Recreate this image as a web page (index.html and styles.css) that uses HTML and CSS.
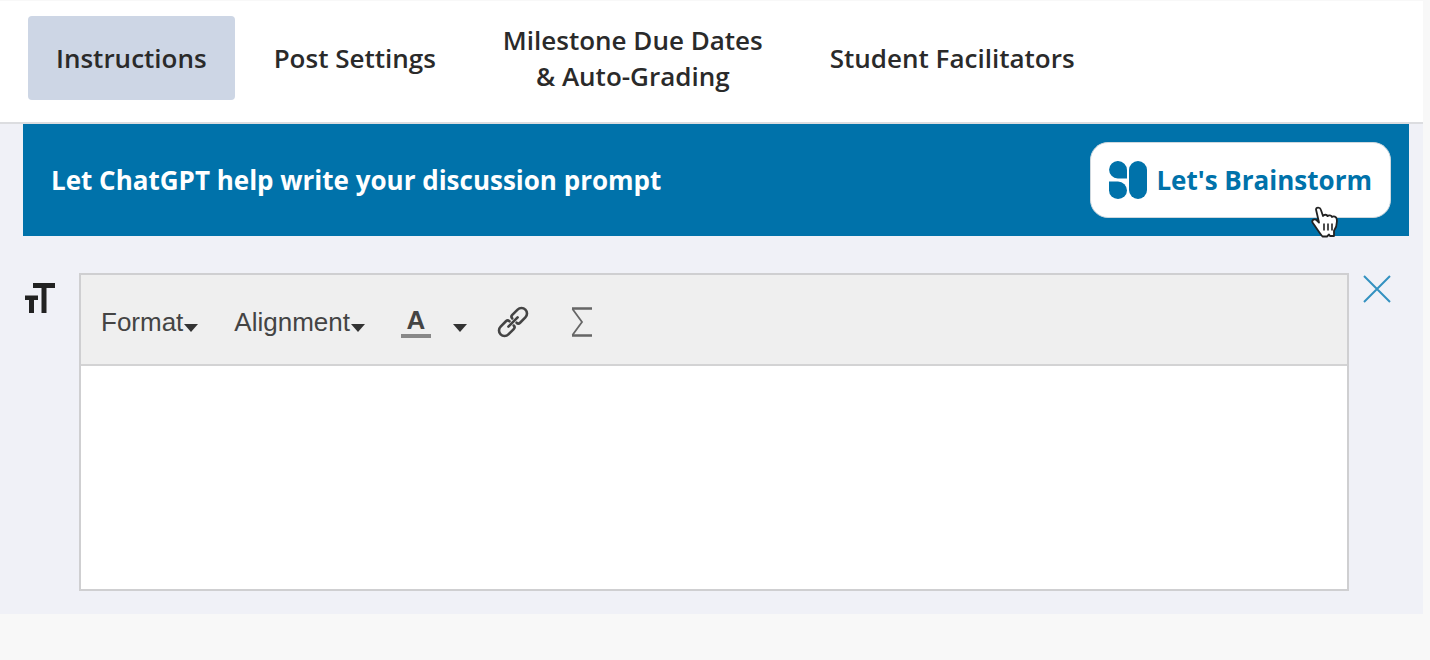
FILE: index.html
```html
<!DOCTYPE html>
<html lang="en">
<head>
    <meta charset="UTF-8">
    <title>Discussion Instructions</title>
    <link rel="stylesheet" href="styles.css">
</head>
<body>

    <!-- Tabs -->
    <nav class="tabs">
        <button type="button" class="tab active">Instructions</button>
        <button type="button" class="tab">Post Settings</button>
        <button type="button" class="tab">Milestone Due Dates<br>&amp; Auto-Grading</button>
        <button type="button" class="tab">Student Facilitators</button>
    </nav>

    <main class="panel">

        <!-- ChatGPT banner -->
        <div class="banner">
            <p class="banner-text">Let ChatGPT help write your discussion prompt</p>
            <button type="button" class="brainstorm">
                <svg class="brainstorm-logo" viewBox="0 0 38 38" fill="#0072aa" aria-hidden="true">
                    <path d="M9 0a9 9 0 0 1 9 9v8.500H8.700A8.700 8.700 0 0 1 9 0z"/>
                    <path d="M0 20.500h9a9 9 0 0 1 9 9a9 8.500 0 0 1-18 0z"/>
                    <rect x="20" y="0" width="18" height="38" rx="9"/>
                </svg>
                Let's Brainstorm
            </button>
            <svg class="pointer" viewBox="0 0 28 32" aria-hidden="true">
                <path d="M5 3.500C5 1 9 .8 9.800 3.500L12 10c1-1.800 4-1.600 4.500.2 1-1.500 4-1 4.500.8 1.500-1.200 4.500-.4 4.800 2.300.4 4-.3 8-2.800 11.500V30h-4l-1-1.500-2 2h-4.500C8.500 27 5.500 22 1.500 16.500c-1-2.500 2-4.500 4.500-2l2 2z" fill="#fff" stroke="#222" stroke-width="1.800" stroke-linejoin="round"/>
                <path d="M13 17.500v7M17 17.500v7M21 17.500v7" stroke="#222" stroke-width="1.600"/>
            </svg>
        </div>

        <!-- Text editor -->
        <div class="editor-row">
            <svg class="text-icon" viewBox="0 0 30 30" fill="#222" aria-hidden="true">
                <path d="M8 0h22v5h-8.500v25h-5V5H8z"/>
                <path d="M0 12.500h13v4.500H9v13H4V17H0z"/>
            </svg>

            <div class="editor">
                <div class="toolbar">
                    <button type="button" class="tool">Format<span class="caret"></span></button>
                    <button type="button" class="tool">Alignment<span class="caret"></span></button>
                    <button type="button" class="tool tool-color" aria-label="Text color">
                        <span class="color-letter">A</span>
                        <span class="caret"></span>
                    </button>
                    <button type="button" class="tool tool-link" aria-label="Link">
                        <svg class="link-icon" viewBox="0 0 32 32" fill="none" stroke="#444" stroke-width="2.600" stroke-linecap="round" aria-hidden="true">
                            <g transform="rotate(-45 16 16)">
                                <path d="M14 13c0-1.500-1-2.500-2.500-2.500H4a5.500 5.500 0 0 0 0 11h7.500c1.500 0 2.500-1 2.500-2.500"/>
                                <path d="M18 13c0-1.500 1-2.500 2.500-2.500H28a5.500 5.500 0 0 1 0 11h-7.500c-1.500 0-2.500-1-2.500-2.500"/>
                                <path d="M9.500 16h13"/>
                            </g>
                        </svg>
                    </button>
                    <button type="button" class="tool" aria-label="Equation">
                        <svg class="sigma-icon" viewBox="0 0 22 30" fill="none" stroke="#666" aria-hidden="true">
                            <path d="M1 1.500h20M1 28.500h20" stroke-width="2.400"/>
                            <path d="M1.500 2 11 15 1.500 28" stroke-width="1.800"/>
                        </svg>
                    </button>
                </div>
                <textarea class="editor-text" aria-label="Instructions text"></textarea>
            </div>

            <button type="button" class="close" aria-label="Close">
                <svg class="close-icon" viewBox="0 0 28 28" fill="none" stroke="#3391c0" stroke-width="2" aria-hidden="true">
                    <path d="M1 1 27 27M27 1 1 27"/>
                </svg>
            </button>
        </div>

    </main>

</body>
</html>
```
FILE: styles.css
```css
* {
    box-sizing: border-box;
    margin: 0;
    padding: 0;
}

body {
    font-family: 'Open Sans', sans-serif;
    background-color: #f8f8f8;
    padding: 1px 7px 0 0;
}

button {
    font-family: inherit;
    border: none;
    background: none;
    cursor: pointer;
}

svg {
    display: block;
    flex-shrink: 0;
}

/* Tabs */
.tabs {
    display: flex;
    gap: 11px;
    padding: 15px 28px 22px;
    background-color: #fff;
    border-bottom: 2px solid #dcdde0;
}

.tab {
    padding: 6px 28px;
    border-radius: 4px;
    font-size: 26px;
    font-weight: 600;
    line-height: 36px;
    color: #2a2a2a;
}

.tab.active {
    background-color: #cdd6e5;
}

.panel {
    background-color: #f0f1f7;
    padding: 0 14px 23px 23px;
}

/* Banner */
.banner {
    position: relative;
    display: flex;
    align-items: center;
    justify-content: space-between;
    padding: 18px 18px 18px 28px;
    background-color: #0072aa;
}

.banner-text {
    font-size: 26px;
    font-weight: 700;
    line-height: 36px;
    color: #fff;
}

.brainstorm {
    display: flex;
    align-items: center;
    gap: 9px;
    height: 76px;
    padding: 0 18px;
    border: 1px solid #cfd8de;
    border-radius: 18px;
    background-color: #fff;
    font-size: 26px;
    font-weight: 700;
    color: #0072aa;
}

.brainstorm-logo {
    width: 38px;
    height: 38px;
}

.pointer {
    position: absolute;
    right: 70px;
    bottom: -2px;
    width: 28px;
    height: 32px;
}

/* Editor */
.editor-row {
    display: flex;
    align-items: flex-start;
    margin-top: 37px;
    padding: 0 18px 0 2px;
}

.text-icon {
    width: 30px;
    height: 30px;
    margin: 10px 24px 0 0;
}

.editor {
    flex: 1;
    border: 2px solid #cfcfd1;
}

.toolbar {
    display: flex;
    align-items: center;
    height: 91px;
    gap: 36px;
    padding: 4px 20px 0;
    background-color: #efefef;
    border-bottom: 2px solid #d3d3d4;
}

.tool {
    display: flex;
    align-items: center;
    font-family: 'Liberation Sans', Arial, sans-serif;
    font-size: 26px;
    line-height: 32px;
    color: #444;
}

.caret {
    margin: 12px 0 0 1px;
    border: 7px solid transparent;
    border-top: 8px solid #333;
    border-bottom: none;
}

.tool-color {
    gap: 21px;
}

.tool-link {
    margin: 0 6px 0 -6px;
}

.color-letter {
    width: 30px;
    border-bottom: 4px solid #888;
    font-weight: 700;
    line-height: 28px;
}

.link-icon {
    width: 32px;
    height: 32px;
}

.sigma-icon {
    width: 22px;
    height: 30px;
}

.editor-text {
    display: block;
    width: 100%;
    height: 223px;
    padding: 16px 20px;
    border: none;
    outline: none;
    resize: none;
    background-color: #fff;
    font-family: 'Liberation Sans', Arial, sans-serif;
    font-size: 26px;
}

.close {
    margin: 2px 0 0 14px;
}

.close-icon {
    width: 28px;
    height: 28px;
}
```
